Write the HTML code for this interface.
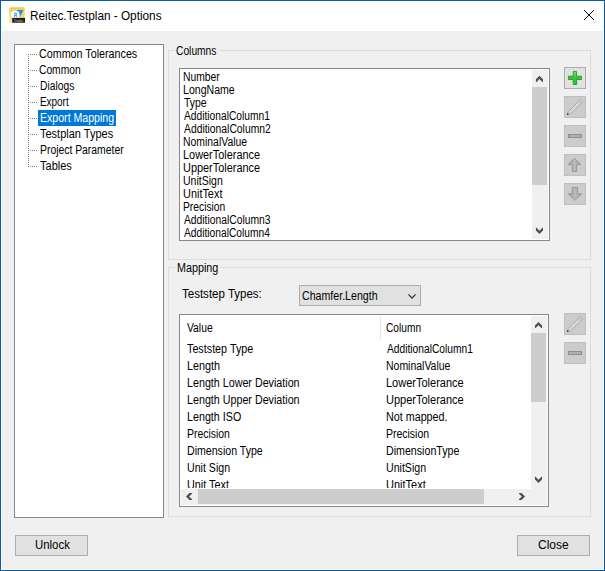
<!DOCTYPE html>
<html><head><meta charset="utf-8">
<style>
*{margin:0;padding:0;box-sizing:border-box}
html,body{width:605px;height:571px;overflow:hidden;background:#fff}
body{position:relative;font-family:"Liberation Sans",sans-serif;font-size:11px;color:#000}
.a{position:absolute}
.t{position:absolute;white-space:nowrap;font-size:12px;line-height:13px;transform-origin:0 0}
#win{left:0;top:0;width:605px;height:571px;border:1px solid #0a5ca0;background:#fff}
#body{left:2px;top:31px;width:601px;height:538px;background:#f0f0f0}
.gb{position:absolute;border:1px solid #dcdcdc}
.gbl{position:absolute;background:#f0f0f0;padding:0 2px;line-height:13px;white-space:nowrap;letter-spacing:-0.2px}
.btn{position:absolute;border:1px solid #adadad;background:#e1e1e1}
.dbtn{position:absolute;border:1px solid #bfbfbf;background:#cccccc}
.sb{position:absolute;background:#f0f0f0}
.thumb{position:absolute;background:#cdcdcd}
</style></head><body>
<div id="win" class="a"></div>
<!-- title -->
<svg class="a" style="left:9px;top:7px" width="16" height="16" viewBox="0 0 16 16">
  <defs><linearGradient id="gy" x1="0" y1="0" x2="0" y2="1"><stop offset="0" stop-color="#f5c84a"/><stop offset="1" stop-color="#fbe49a"/></linearGradient></defs>
  <rect x="0.3" y="0.3" width="15.4" height="15.4" rx="1.2" fill="url(#gy)"/>
  <polygon points="4.8,3 14.4,3 11.1,9.8" fill="#1a8fe3"/>
  <circle cx="6.3" cy="7.6" r="4.4" fill="#fff"/>
  <text transform="translate(6.5,9.9) scale(0.72,1)" font-size="6.2" font-family="Liberation Sans" fill="#2f95e6" stroke="#2f95e6" stroke-width="0.35" text-anchor="middle">R</text>
  <rect x="3.2" y="10.9" width="12.8" height="4.8" fill="#1c1c1c"/>
  <text x="9.6" y="14.6" font-size="4" font-family="Liberation Sans" fill="#9a9a9a" text-anchor="middle" textLength="10">Testplan</text>
</svg>
<svg class="a" style="left:584px;top:10px" width="10" height="10" shape-rendering="crispEdges" fill="#000"><rect x="0" y="0" width="1" height="1"/><rect x="9" y="0" width="1" height="1"/><rect x="0" y="9" width="1" height="1"/><rect x="9" y="9" width="1" height="1"/><rect x="1" y="1" width="1" height="1"/><rect x="8" y="1" width="1" height="1"/><rect x="1" y="8" width="1" height="1"/><rect x="8" y="8" width="1" height="1"/><rect x="2" y="2" width="1" height="1"/><rect x="7" y="2" width="1" height="1"/><rect x="2" y="7" width="1" height="1"/><rect x="7" y="7" width="1" height="1"/><rect x="3" y="3" width="1" height="1"/><rect x="6" y="3" width="1" height="1"/><rect x="3" y="6" width="1" height="1"/><rect x="6" y="6" width="1" height="1"/><rect x="4" y="4" width="1" height="1"/><rect x="5" y="4" width="1" height="1"/><rect x="4" y="5" width="1" height="1"/><rect x="5" y="5" width="1" height="1"/></svg>
<div id="body" class="a"></div>

<!-- tree -->
<div class="a" style="left:14px;top:44px;width:150px;height:474px;border:1px solid #828790;background:#fff"></div>
<div class="a" style="left:28px;top:54px;width:1px;height:113px;background-image:linear-gradient(#808080 50%,transparent 50%);background-size:1px 2px"></div>
<div class="a" style="left:29px;top:54px;width:9px;height:1px;background-image:linear-gradient(90deg,transparent 50%,#808080 50%);background-size:2px 1px"></div>
<div class="a" style="left:29px;top:70px;width:9px;height:1px;background-image:linear-gradient(90deg,transparent 50%,#808080 50%);background-size:2px 1px"></div>
<div class="a" style="left:29px;top:86px;width:9px;height:1px;background-image:linear-gradient(90deg,transparent 50%,#808080 50%);background-size:2px 1px"></div>
<div class="a" style="left:29px;top:102px;width:9px;height:1px;background-image:linear-gradient(90deg,transparent 50%,#808080 50%);background-size:2px 1px"></div>
<div class="a" style="left:29px;top:118px;width:9px;height:1px;background-image:linear-gradient(90deg,transparent 50%,#808080 50%);background-size:2px 1px"></div>
<div class="a" style="left:29px;top:134px;width:9px;height:1px;background-image:linear-gradient(90deg,transparent 50%,#808080 50%);background-size:2px 1px"></div>
<div class="a" style="left:29px;top:150px;width:9px;height:1px;background-image:linear-gradient(90deg,transparent 50%,#808080 50%);background-size:2px 1px"></div>
<div class="a" style="left:29px;top:166px;width:9px;height:1px;background-image:linear-gradient(90deg,transparent 50%,#808080 50%);background-size:2px 1px"></div>
<div class="a" style="left:38px;top:110px;width:78px;height:16px;background:#0078d7"></div>

<!-- Columns group -->
<div class="gb" style="left:168px;top:50px;width:423px;height:210px"></div>
<div class="a" style="left:175px;top:49px;width:45px;height:3px;background:#f0f0f0"></div>
<div class="a" style="left:179px;top:68px;width:371px;height:173px;border:1px solid #828790;background:#fff"></div>
<div class="sb" style="left:532px;top:70px;width:16px;height:169px"></div>
<div class="thumb" style="left:532px;top:87px;width:15px;height:98px"></div>

<!-- side buttons -->
<div class="btn" style="left:564px;top:67px;width:22px;height:22px"></div>
<svg class="a" style="left:564px;top:67px" width="22" height="22" viewBox="0 0 22 22">
  <defs><linearGradient id="gp" x1="0" y1="0" x2="0" y2="1"><stop offset="0" stop-color="#7ae67a"/><stop offset="0.5" stop-color="#3cbf3c"/><stop offset="1" stop-color="#1ed61e"/></linearGradient></defs>
  <path d="M9.25 4.45 H12.55 V9.25 H17.45 V12.55 H12.55 V17.45 H9.25 V12.55 H4.45 V9.25 H9.25 Z" fill="url(#gp)" stroke="#1f9a1f" stroke-width="0.9" stroke-linejoin="round"/>
</svg>
<div class="dbtn" style="left:564px;top:96px;width:22px;height:22px"></div>
<svg class="a" style="left:564px;top:96px" width="22" height="22" viewBox="0 0 22 22">
  <path d="M3.3 18.6 L4.4 15.5 L16.4 3.4 L18.8 5.7 L6.6 17.7 Z" fill="#dcdcdc" stroke="#9a9a9a" stroke-width="0.8" stroke-linejoin="round"/>
  <path d="M5.6 16.4 L16.8 5.2" stroke="#bdbdbd" stroke-width="0.8" stroke-dasharray="0.9 1.1"/>
  <path d="M14.9 4.9 L17.3 7.2" stroke="#a6a6a6" stroke-width="0.7"/>
  <circle cx="3.7" cy="18.1" r="0.85" fill="#3a3a3a"/>
</svg>
<div class="dbtn" style="left:564px;top:125px;width:22px;height:22px"></div>
<div class="a" style="left:568px;top:134px;width:14px;height:4px;background:#b0b0b0;border:1px solid #8e8e8e;border-radius:0.5px"></div>
<div class="dbtn" style="left:564px;top:154px;width:22px;height:22px"></div>
<svg class="a" style="left:564px;top:154px" width="22" height="22" viewBox="0 0 22 22">
  <defs><linearGradient id="ga" x1="0" y1="0" x2="1" y2="0"><stop offset="0" stop-color="#a2a2a2"/><stop offset="0.5" stop-color="#bababa"/><stop offset="1" stop-color="#a2a2a2"/></linearGradient></defs>
  <path d="M10.4 4.2 L16.8 10.6 H12.6 V17.4 H8.4 V10.6 H4.2 Z" fill="url(#ga)" stroke="#8e8e8e" stroke-width="0.8" stroke-linejoin="round"/>
</svg>
<div class="dbtn" style="left:564px;top:183px;width:22px;height:22px"></div>
<svg class="a" style="left:564px;top:183px" width="22" height="22" viewBox="0 0 22 22">
  <path d="M11 17.4 L17.6 10.8 H13.6 V4.6 H8.4 V10.8 H4.4 Z" fill="url(#ga)" stroke="#8e8e8e" stroke-width="0.8" stroke-linejoin="round"/>
</svg>

<!-- Mapping group -->
<div class="gb" style="left:168px;top:267px;width:423px;height:250px"></div>
<div class="a" style="left:175px;top:266px;width:45px;height:3px;background:#f0f0f0"></div>
<div class="btn" style="left:299px;top:285px;width:122px;height:21px"></div>
<svg class="a" style="left:407px;top:293px" width="10" height="7"><path d="M1.4 1.4 L5 5 L8.6 1.4" stroke="#383838" stroke-width="1.25" fill="none"/></svg>

<div class="a" style="left:179px;top:314px;width:370px;height:193px;border:1px solid #828790;background:#fff"></div>
<div class="a" style="left:380px;top:316px;width:1px;height:24px;background:#e5e5e5"></div>
<div class="a" style="left:181px;top:316px;width:350px;height:172px;overflow:hidden">
<div class="t" style="left:6.40px;top:27px;transform:scaleX(0.8973)">Teststep Type</div>
<div class="t" style="left:6.10px;top:44px;transform:scaleX(0.9029)">Length</div>
<div class="t" style="left:5.51px;top:61px;transform:scaleX(0.8928)">Length Lower Deviation</div>
<div class="t" style="left:5.51px;top:78px;transform:scaleX(0.8928)">Length Upper Deviation</div>
<div class="t" style="left:5.51px;top:95px;transform:scaleX(0.8932)">Length ISO</div>
<div class="t" style="left:5.53px;top:112px;transform:scaleX(0.8667)">Precision</div>
<div class="t" style="left:5.52px;top:129px;transform:scaleX(0.8824)">Dimension Type</div>
<div class="t" style="left:5.51px;top:146px;transform:scaleX(0.8851)">Unit Sign</div>
<div class="t" style="left:5.50px;top:163px;transform:scaleX(0.9043)">Unit Text</div>
<div class="t" style="left:206.10px;top:27px;transform:scaleX(0.8520)">AdditionalColumn1</div>
<div class="t" style="left:205.23px;top:44px;transform:scaleX(0.8726)">NominalValue</div>
<div class="t" style="left:205.18px;top:61px;transform:scaleX(0.9169)">LowerTolerance</div>
<div class="t" style="left:205.18px;top:78px;transform:scaleX(0.9169)">UpperTolerance</div>
<div class="t" style="left:205.20px;top:95px;transform:scaleX(0.8955)">Not mapped.</div>
<div class="t" style="left:205.23px;top:112px;transform:scaleX(0.8729)">Precision</div>
<div class="t" style="left:205.21px;top:129px;transform:scaleX(0.8877)">DimensionType</div>
<div class="t" style="left:205.22px;top:146px;transform:scaleX(0.8841)">UnitSign</div>
<div class="t" style="left:205.18px;top:163px;transform:scaleX(0.9167)">UnitText</div>
</div>
<div class="sb" style="left:531px;top:316px;width:16px;height:189px"></div>
<div class="thumb" style="left:531px;top:333px;width:15px;height:69px"></div>
<div class="sb" style="left:181px;top:489px;width:350px;height:16px"></div>
<div class="thumb" style="left:198px;top:489px;width:286px;height:15px"></div>

<div class="dbtn" style="left:564px;top:313px;width:22px;height:22px"></div>
<svg class="a" style="left:564px;top:313px" width="22" height="22" viewBox="0 0 22 22">
  <path d="M3.3 18.6 L4.4 15.5 L16.4 3.4 L18.8 5.7 L6.6 17.7 Z" fill="#dcdcdc" stroke="#9a9a9a" stroke-width="0.8" stroke-linejoin="round"/>
  <path d="M5.6 16.4 L16.8 5.2" stroke="#bdbdbd" stroke-width="0.8" stroke-dasharray="0.9 1.1"/>
  <path d="M14.9 4.9 L17.3 7.2" stroke="#a6a6a6" stroke-width="0.7"/>
  <circle cx="3.7" cy="18.1" r="0.85" fill="#3a3a3a"/>
</svg>
<div class="dbtn" style="left:564px;top:342px;width:22px;height:22px"></div>
<div class="a" style="left:568px;top:351px;width:14px;height:4px;background:#b0b0b0;border:1px solid #8e8e8e;border-radius:0.5px"></div>

<!-- bottom buttons -->
<div class="btn" style="left:15px;top:535px;width:73px;height:21px"></div>
<div class="btn" style="left:517px;top:535px;width:73px;height:21px"></div>
<svg class="a" style="left:0;top:0" width="605" height="571">
<polygon points="535.90,79.30 539.45,75.80 543.00,79.30 543.00,81.90 542.30,81.90 539.45,79.00 536.60,81.90 535.90,81.90" fill="#505050"/>
<polygon points="535.90,230.40 539.45,233.90 543.00,230.40 543.00,227.80 542.30,227.80 539.45,230.70 536.60,227.80 535.90,227.80" fill="#505050"/>
<polygon points="534.95,325.45 538.50,321.95 542.05,325.45 542.05,328.05 541.35,328.05 538.50,325.15 535.65,328.05 534.95,328.05" fill="#505050"/>
<polygon points="534.95,479.40 538.50,482.90 542.05,479.40 542.05,476.80 541.35,476.80 538.50,479.70 535.65,476.80 534.95,476.80" fill="#505050"/>
<polygon points="189.45,492.95 185.95,496.50 189.45,500.05 192.05,500.05 192.05,499.35 189.15,496.50 192.05,493.65 192.05,492.95" fill="#505050"/>
<polygon points="521.55,492.95 525.05,496.50 521.55,500.05 518.95,500.05 518.95,499.35 521.85,496.50 518.95,493.65 518.95,492.95" fill="#505050"/>
</svg>
<div class="t" style="left:30.02px;top:10px;transform:scaleX(0.9812);">Reitec.Testplan - Options</div>
<div class="t" style="left:38.71px;top:48px;transform:scaleX(0.8944);">Common Tolerances</div>
<div class="t" style="left:38.74px;top:64px;transform:scaleX(0.8553);">Common</div>
<div class="t" style="left:39.74px;top:80px;transform:scaleX(0.8564);">Dialogs</div>
<div class="t" style="left:39.77px;top:96px;transform:scaleX(0.8265);">Export</div>
<div class="t" style="left:39.72px;top:112px;transform:scaleX(0.8817);color:#fff">Export Mapping</div>
<div class="t" style="left:40.00px;top:128px;transform:scaleX(0.9165);">Testplan Types</div>
<div class="t" style="left:39.74px;top:144px;transform:scaleX(0.8646);">Project Parameter</div>
<div class="t" style="left:40.00px;top:160px;transform:scaleX(0.9176);">Tables</div>
<div class="t" style="left:176.05px;top:45px;transform:scaleX(0.8543);">Columns</div>
<div class="t" style="left:182.64px;top:71px;transform:scaleX(0.8619);">Number</div>
<div class="t" style="left:182.62px;top:84px;transform:scaleX(0.8807);">LongName</div>
<div class="t" style="left:183.50px;top:97px;transform:scaleX(0.8692);">Type</div>
<div class="t" style="left:183.50px;top:110px;transform:scaleX(0.8530);">AdditionalColumn1</div>
<div class="t" style="left:183.50px;top:123px;transform:scaleX(0.8610);">AdditionalColumn2</div>
<div class="t" style="left:182.63px;top:136px;transform:scaleX(0.8685);">NominalValue</div>
<div class="t" style="left:182.59px;top:149px;transform:scaleX(0.9096);">LowerTolerance</div>
<div class="t" style="left:182.59px;top:162px;transform:scaleX(0.9096);">UpperTolerance</div>
<div class="t" style="left:182.62px;top:175px;transform:scaleX(0.8773);">UnitSign</div>
<div class="t" style="left:182.59px;top:188px;transform:scaleX(0.9095);">UnitText</div>
<div class="t" style="left:182.64px;top:201px;transform:scaleX(0.8562);">Precision</div>
<div class="t" style="left:183.50px;top:214px;transform:scaleX(0.8580);">AdditionalColumn3</div>
<div class="t" style="left:183.50px;top:227px;transform:scaleX(0.8525);">AdditionalColumn4</div>
<div class="t" style="left:176.90px;top:262px;transform:scaleX(0.8977);">Mapping</div>
<div class="t" style="left:181.60px;top:288px;transform:scaleX(0.9598);">Teststep Types:</div>
<div class="t" style="left:301.81px;top:290px;transform:scaleX(0.8857);">Chamfer.Length</div>
<div class="t" style="left:187.40px;top:322px;transform:scaleX(0.8600);">Value</div>
<div class="t" style="left:386.25px;top:322px;transform:scaleX(0.8475);">Column</div>
<div class="t" style="left:34.65px;top:539px;transform:scaleX(0.9500);">Unlock</div>
<div class="t" style="left:537.90px;top:539px;transform:scaleX(0.9966);">Close</div>
</body></html>
